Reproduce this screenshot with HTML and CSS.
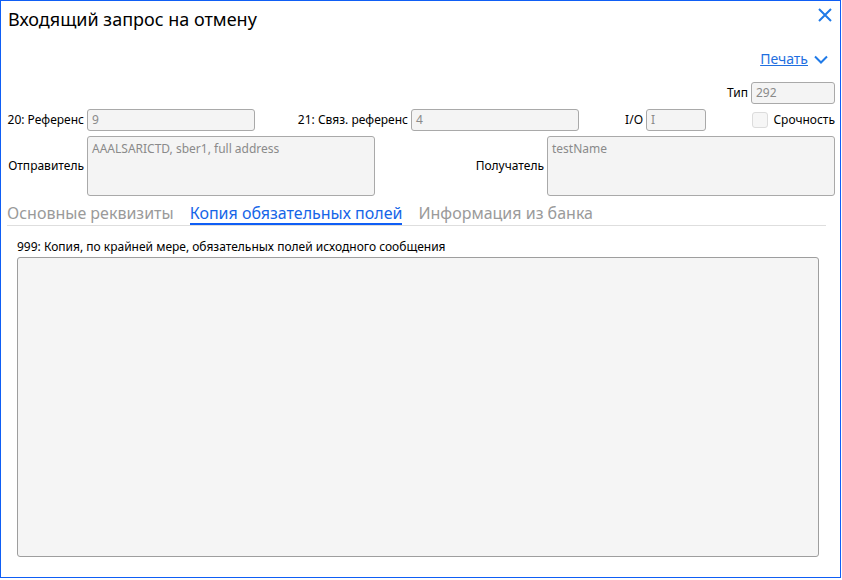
FILE: index.html
```html
<!DOCTYPE html>
<html lang="ru">
<head>
<meta charset="utf-8">
<title>Входящий запрос на отмену</title>
<link rel="stylesheet" href="styles.css">
</head>
<body>
<div class="dialog">
  <div class="header">
    <h1 class="title">Входящий запрос на отмену</h1>
    <button class="close" aria-label="Закрыть">
      <svg width="14" height="14" viewBox="0 0 14 14"><path d="M1 1L13 13M13 1L1 13" stroke="#1f7ae8" stroke-width="2" fill="none"/></svg>
    </button>
  </div>
  <div class="print-row">
    <a class="print-link" href="#">Печать</a>
    <svg class="chev" width="14" height="9" viewBox="0 0 14 9"><path d="M1 1.5L7 7.5L13 1.5" stroke="#1f7ae8" stroke-width="2" fill="none"/></svg>
  </div>
  <div class="form">
    <div class="row row-type">
      <span class="lbl">Тип</span>
      <div class="inp w-type">292</div>
    </div>
    <div class="row">
      <span class="lbl c1">20: Референс</span>
      <div class="inp w-ref">9</div>
      <span class="lbl c2">21: Связ. референс</span>
      <div class="inp w-ref">4</div>
      <span class="lbl c3">I/O</span>
      <div class="inp w-io">I</div>
      <div class="urgent">
        <span class="check"></span>
        <span class="lbl">Срочность</span>
      </div>
    </div>
    <div class="row row-area">
      <span class="lbl c1">Отправитель</span>
      <div class="inp area">AAALSARICTD, sber1, full address</div>
      <span class="lbl c4">Получатель</span>
      <div class="inp area">testName</div>
    </div>
  </div>
  <div class="tabs">
    <span class="tab">Основные реквизиты</span>
    <span class="tab active">Копия обязательных полей</span>
    <span class="tab">Информация из банка</span>
  </div>
  <div class="panel">
    <div class="panel-label">999: Копия, по крайней мере, обязательных полей исходного сообщения</div>
    <div class="big-area"></div>
  </div>
</div>
</body>
</html>
```
FILE: styles.css
```css
* { box-sizing: border-box; }
html, body { margin: 0; padding: 0; }
body {
  background: #ffffff;
  font-family: "Noto Sans", "Open Sans", sans-serif;
  color: #000;
}
.dialog {
  width: 841px;
  height: 578px;
  border: 1px solid #0f5ef5;
  background: #fff;
  box-shadow: 0 2px 0 #a0a0a0;
}
.header {
  display: flex;
  justify-content: space-between;
  align-items: flex-start;
  padding: 6px 8px 0 7px;
  height: 36px;
}
.title {
  margin: 0;
  font-size: 18px;
  font-weight: normal;
  line-height: 24px;
}
.close {
  border: 0;
  background: none;
  padding: 0;
  margin-top: 1px;
  width: 14px;
  height: 14px;
  display: flex;
}
.print-row {
  display: flex;
  justify-content: flex-end;
  align-items: center;
  gap: 6px;
  padding-right: 12px;
  height: 45px;
  padding-bottom: 2px;
}
.print-link {
  color: #1f6fe0;
  font-size: 14px;
  text-decoration: underline;
}
.chev { margin-top: 1px; }
.form {
  padding: 0 5px 0 6px;
  display: flex;
  flex-direction: column;
  gap: 5px;
}
.row {
  display: flex;
  align-items: center;
  gap: 3px;
  height: 22px;
}
.row-area { height: 60px; }
.row-type { justify-content: flex-end; }
.lbl {
  font-size: 12px;
  line-height: 16px;
  white-space: nowrap;
}
.c1 { width: 77px; text-align: right; flex: none; }
.c2 { width: 150px; text-align: right; flex: none; }
.c3 { width: 61px; text-align: right; flex: none; }
.c4 { width: 166px; text-align: right; flex: none; }
.inp {
  height: 22px;
  background: #f4f4f4;
  border: 1px solid #a9a9a9;
  border-radius: 3px;
  color: #8a8a8a;
  font-size: 12px;
  padding: 2px 4px;
  line-height: 16px;
  flex: none;
}
.w-type { width: 84px; }
.w-ref { width: 168px; }
.w-io { width: 60px; }
.area {
  width: 288px;
  height: 60px;
  padding-top: 4px;
}
.urgent {
  flex: 1;
  display: flex;
  justify-content: flex-end;
  align-items: center;
  gap: 5px;
}
.check {
  width: 16px;
  height: 16px;
  border: 1px solid #dcdcdc;
  border-radius: 3px;
  background: #f6f6f6;
}
.tabs {
  margin: 7px 14px 0 6px;
  display: flex;
  gap: 16px;
  border-bottom: 1px solid #dedede;
  height: 23px;
}
.tab {
  font-size: 16px;
  color: #9a9a9a;
  line-height: 20px;
  height: 22px;
}
.tab.active {
  color: #1565e8;
  border-bottom: 2px solid #0f5ef5;
}
.panel {
  padding: 13px 21px 0 16px;
}
.panel-label {
  font-size: 12px;
  line-height: 16px;
  margin-bottom: 2px;
}
.big-area {
  height: 300px;
  background: #f5f5f5;
  border: 1px solid #9e9e9e;
  border-radius: 3px;
}
```
